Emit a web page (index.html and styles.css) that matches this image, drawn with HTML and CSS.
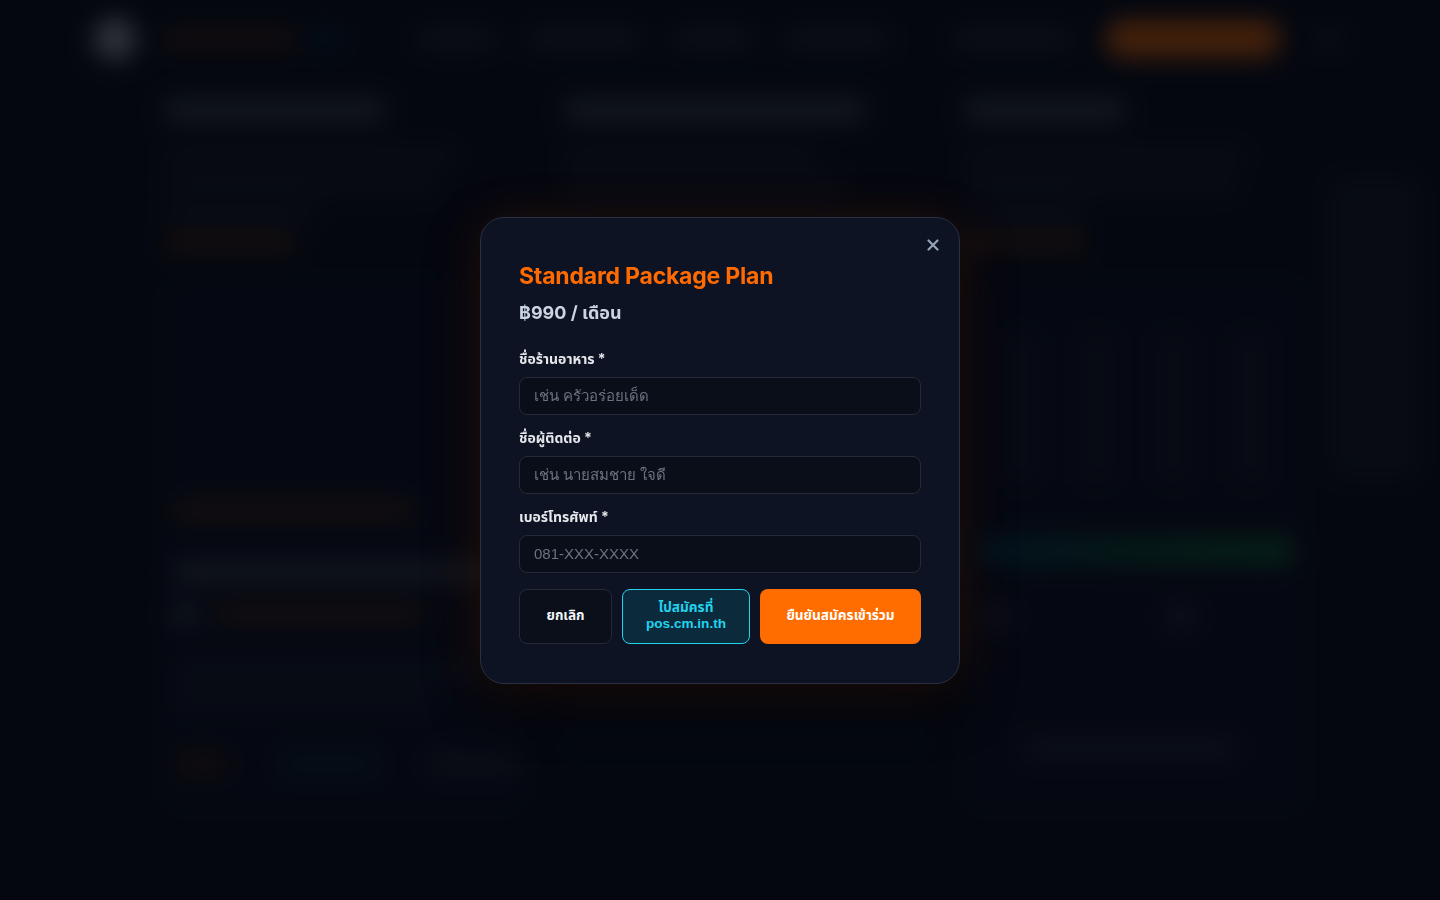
FILE: index.html
```html
<!DOCTYPE html>
<html lang="th">
<head>
<meta charset="utf-8">
<title>Standard Package Plan</title>
<link rel="stylesheet" href="styles.css">
</head>
<body>
  <div class="page">
    <header class="nav">
      <div class="brand">
        <span class="logo"></span>
        <span class="sk sk-orange brand-name"></span>
        <span class="sk sk-cyan brand-tag"></span>
      </div>
      <nav class="links">
        <span class="sk sk-gray w75"></span>
        <span class="sk sk-gray w115"></span>
        <span class="sk sk-gray w80"></span>
        <span class="sk sk-gray w105"></span>
      </nav>
      <div class="nav-right">
        <span class="sk sk-gray w115"></span>
        <span class="cta"></span>
        <span class="sk sk-gray w24"></span>
      </div>
    </header>

    <main class="grid">
      <section class="col">
        <span class="sk sk-light h-title w220"></span>
        <div class="lines">
          <span class="sk sk-dim w290"></span>
          <span class="sk sk-dim w270"></span>
          <span class="sk sk-dim w150"></span>
        </div>
        <span class="sk sk-orange h-link w130"></span>
        <div class="card">
          <span class="sk sk-orange w240 mt-card"></span>
          <span class="sk sk-light w330 h-big"></span>
          <div class="row">
            <span class="sk sk-light sq"></span>
            <span class="sk sk-orange w210"></span>
          </div>
          <span class="sk sk-dim w300 mt-text"></span>
          <span class="sk sk-dim w260"></span>
          <div class="pills">
            <span class="pill pill-orange"></span>
            <span class="pill pill-blue"></span>
            <span class="pill pill-gray"></span>
          </div>
        </div>
      </section>

      <section class="col">
        <span class="sk sk-light h-title w300"></span>
        <div class="lines">
          <span class="sk sk-dim w250"></span>
          <span class="sk sk-dim w280"></span>
        </div>
        <div class="panel"></div>
      </section>

      <section class="col">
        <span class="sk sk-light h-title w160"></span>
        <div class="lines">
          <span class="sk sk-dim w280"></span>
          <span class="sk sk-dim w270"></span>
          <span class="sk sk-dim w120"></span>
        </div>
        <span class="sk sk-orange h-link w120"></span>
        <div class="card card-right">
          <div class="bars">
            <span></span><span></span><span></span><span></span>
          </div>
          <span class="gradient-bar"></span>
          <div class="row spread">
            <span class="sk sk-gray sq"></span>
            <span class="sk sk-gray sq"></span>
          </div>
          <span class="sk sk-gray w210 mt-foot"></span>
        </div>
      </section>

      <aside class="side">
        <span class="side-block"></span>
      </aside>
    </main>
  </div>

  <div class="overlay">
    <div class="modal" role="dialog" aria-labelledby="plan-title">
      <button class="close" type="button" aria-label="ปิด">
        <svg width="12" height="12" viewBox="0 0 12 12" aria-hidden="true">
          <path d="M1.5 1.5 L10.5 10.5 M10.5 1.5 L1.5 10.5" stroke="currentColor" stroke-width="2.2" stroke-linecap="round" fill="none"/>
        </svg>
      </button>
      <h2 class="title" id="plan-title">Standard Package Plan</h2>
      <p class="price">฿990 / เดือน</p>

      <form class="form">
        <label class="field">
          <span class="label">ชื่อร้านอาหาร *</span>
          <input class="input" type="text" placeholder="เช่น ครัวอร่อยเด็ด">
        </label>
        <label class="field">
          <span class="label">ชื่อผู้ติดต่อ *</span>
          <input class="input" type="text" placeholder="เช่น นายสมชาย ใจดี">
        </label>
        <label class="field">
          <span class="label">เบอร์โทรศัพท์ *</span>
          <input class="input" type="tel" placeholder="081-XXX-XXXX">
        </label>

        <div class="actions">
          <button class="btn btn-cancel" type="button">ยกเลิก</button>
          <button class="btn btn-link" type="button">ไปสมัครที่<br>pos.cm.in.th</button>
          <button class="btn btn-primary" type="button">ยืนยันสมัครเข้าร่วม</button>
        </div>
      </form>
    </div>
  </div>
</body>
</html>
```

FILE: styles.css
```css
* { box-sizing: border-box; }

html, body {
  margin: 0;
  height: 100%;
}

body {
  background: #0a0e1b;
  font-family: "Inter", "Noto Sans Thai", "Noto Sans Thai UI", "Noto Sans", sans-serif;
  color: #e5e7eb;
  overflow: hidden;
}

/* ---------- page behind the dialog ---------- */
.page {
  width: 1440px;
  height: 900px;
}

.nav {
  height: 78px;
  display: flex;
  align-items: center;
  padding: 0 100px 0 94px;
}

.brand {
  display: flex;
  align-items: center;
  gap: 26px;
}

.logo {
  width: 42px;
  height: 42px;
  border-radius: 50%;
  background: #8a8c94;
}

.brand-name { width: 135px; height: 20px; }
.brand-tag { width: 26px; height: 20px; margin-left: -10px; }

.links {
  display: flex;
  gap: 32px;
  margin-left: 80px;
}

.nav-right {
  display: flex;
  align-items: center;
  gap: 35px;
  margin-left: auto;
}

.cta {
  width: 176px;
  height: 38px;
  border-radius: 20px;
  background: #c2560c;
}

.sk {
  display: block;
  height: 14px;
  border-radius: 6px;
}
.sk-gray { background: #2a2f3d; }
.sk-dim { background: #1c2130; }
.sk-light { background: #343a48; }
.sk-orange { background: #4a2a14; }
.sk-cyan { background: #0c3140; }

.w24 { width: 24px; }
.w75 { width: 75px; }
.w80 { width: 80px; }
.w105 { width: 105px; }
.w115 { width: 115px; }
.w120 { width: 120px; }
.w130 { width: 130px; }
.w150 { width: 150px; }
.w160 { width: 160px; }
.w210 { width: 210px; }
.w220 { width: 220px; }
.w240 { width: 240px; }
.w250 { width: 250px; }
.w260 { width: 260px; }
.w270 { width: 270px; }
.w280 { width: 280px; }
.w290 { width: 290px; }
.w300 { width: 300px; }
.w330 { width: 330px; }

.h-title { height: 24px; }
.h-link { height: 16px; margin-top: 14px; }
.h-big { height: 20px; margin-top: 30px; }

.grid {
  display: grid;
  grid-template-columns: 360px 360px 340px 100px;
  column-gap: 40px;
  padding: 20px 0 0 165px;
}

.col {
  display: flex;
  flex-direction: column;
}

.lines {
  display: flex;
  flex-direction: column;
  gap: 14px;
  margin-top: 28px;
}

.card {
  margin-top: 30px;
  height: 530px;
  border-radius: 18px;
  background: #0d1120;
  display: flex;
  flex-direction: column;
  padding: 0 8px;
  gap: 14px;
}

.mt-card { margin-top: 224px; }
.mt-text { margin-top: 24px; }

.row {
  display: flex;
  align-items: center;
  gap: 18px;
  margin-top: 6px;
}
.row.spread { gap: 160px; margin: 26px 10px 0; }

.sq { width: 24px; height: 24px; border-radius: 6px; }

.pills {
  display: flex;
  gap: 50px;
  margin-top: 32px;
}
.pill { height: 24px; border-radius: 12px; }
.pill-orange { width: 56px; background: #2e1c14; }
.pill-blue { width: 100px; background: #0f2235; }
.pill-gray { width: 90px; background: #1f2330; }

.panel {
  margin-top: 46px;
  height: 520px;
  border-radius: 18px;
  background: #0c111e;
}

.card-right { padding: 14px 10px 0; }

.bars {
  display: flex;
  justify-content: space-between;
  align-items: flex-end;
  height: 190px;
  padding: 0 30px;
}
.bars span {
  width: 30px;
  height: 150px;
  background: #151a28;
  border-radius: 4px;
}

.gradient-bar {
  display: block;
  height: 26px;
  border-radius: 13px;
  margin-top: 40px;
  background: linear-gradient(90deg, #06324a, #0a4a33, #0e5a32);
}

.mt-foot { margin: 100px 0 0 50px; }

.side {
  padding-top: 80px;
  margin-left: -15px;
}
.side-block {
  display: block;
  width: 90px;
  height: 300px;
  border-radius: 16px;
  background: #151a26;
}

/* ---------- dialog layer ---------- */
.overlay {
  position: fixed;
  inset: 0;
  display: flex;
  align-items: center;
  justify-content: center;
  background: rgba(2, 4, 10, 0.66);
  backdrop-filter: blur(12px);
  -webkit-backdrop-filter: blur(12px);
}

.modal {
  position: relative;
  width: 480px;
  padding: 41px 38px 39px;
  border-radius: 24px;
  background: #0d1322;
  border: 1px solid #283041;
  box-shadow: 0 0 50px rgba(255, 107, 0, 0.12), 0 20px 50px rgba(0, 0, 0, 0.5);
}

.close {
  position: absolute;
  top: 15px;
  right: 14px;
  width: 24px;
  height: 24px;
  padding: 0;
  border: 0;
  background: none;
  color: #94a3b8;
  display: flex;
  align-items: center;
  justify-content: center;
  cursor: pointer;
}

.title {
  margin: 0;
  font-size: 23px;
  line-height: 34px;
  font-weight: 700;
  letter-spacing: -0.2px;
  color: #ff6b00;
}

.price {
  margin: 7px 0 0;
  font-size: 18px;
  line-height: 26px;
  font-weight: 700;
  color: #cbd5e1;
}

.form {
  display: flex;
  flex-direction: column;
  gap: 13px;
  margin-top: 23px;
}

.field {
  display: flex;
  flex-direction: column;
  gap: 8px;
}

.label {
  font-size: 14px;
  line-height: 20px;
  font-weight: 700;
  color: #e5e7eb;
}

.input {
  height: 38px;
  width: 100%;
  padding: 0 14px;
  border-radius: 8px;
  border: 1px solid #232a38;
  background: #0a0e18;
  color: #e5e7eb;
  font-family: "Liberation Sans", Arial, sans-serif;
  font-size: 15px;
  outline: none;
}

.input::placeholder {
  color: #6b7280;
}

.actions {
  display: flex;
  gap: 10px;
  margin-top: 3px;
}

.btn {
  height: 55px;
  border-radius: 8px;
  font-family: "Liberation Sans", "Noto Sans Thai", "Noto Sans Thai UI", sans-serif;
  font-size: 13.6px;
  line-height: 16px;
  font-weight: 700;
  cursor: pointer;
  padding: 0;
}

.btn-cancel {
  width: 93px;
  background: #0a0f1a;
  border: 1px solid #232a38;
  color: #f1f5f9;
}

.btn-link {
  width: 128px;
  background: #0b2a3c;
  border: 1px solid #22d3ee;
  color: #22d3ee;
}

.btn-primary {
  flex: 1;
  background: #ff6d00;
  border: 0;
  color: #ffffff;
}
```
